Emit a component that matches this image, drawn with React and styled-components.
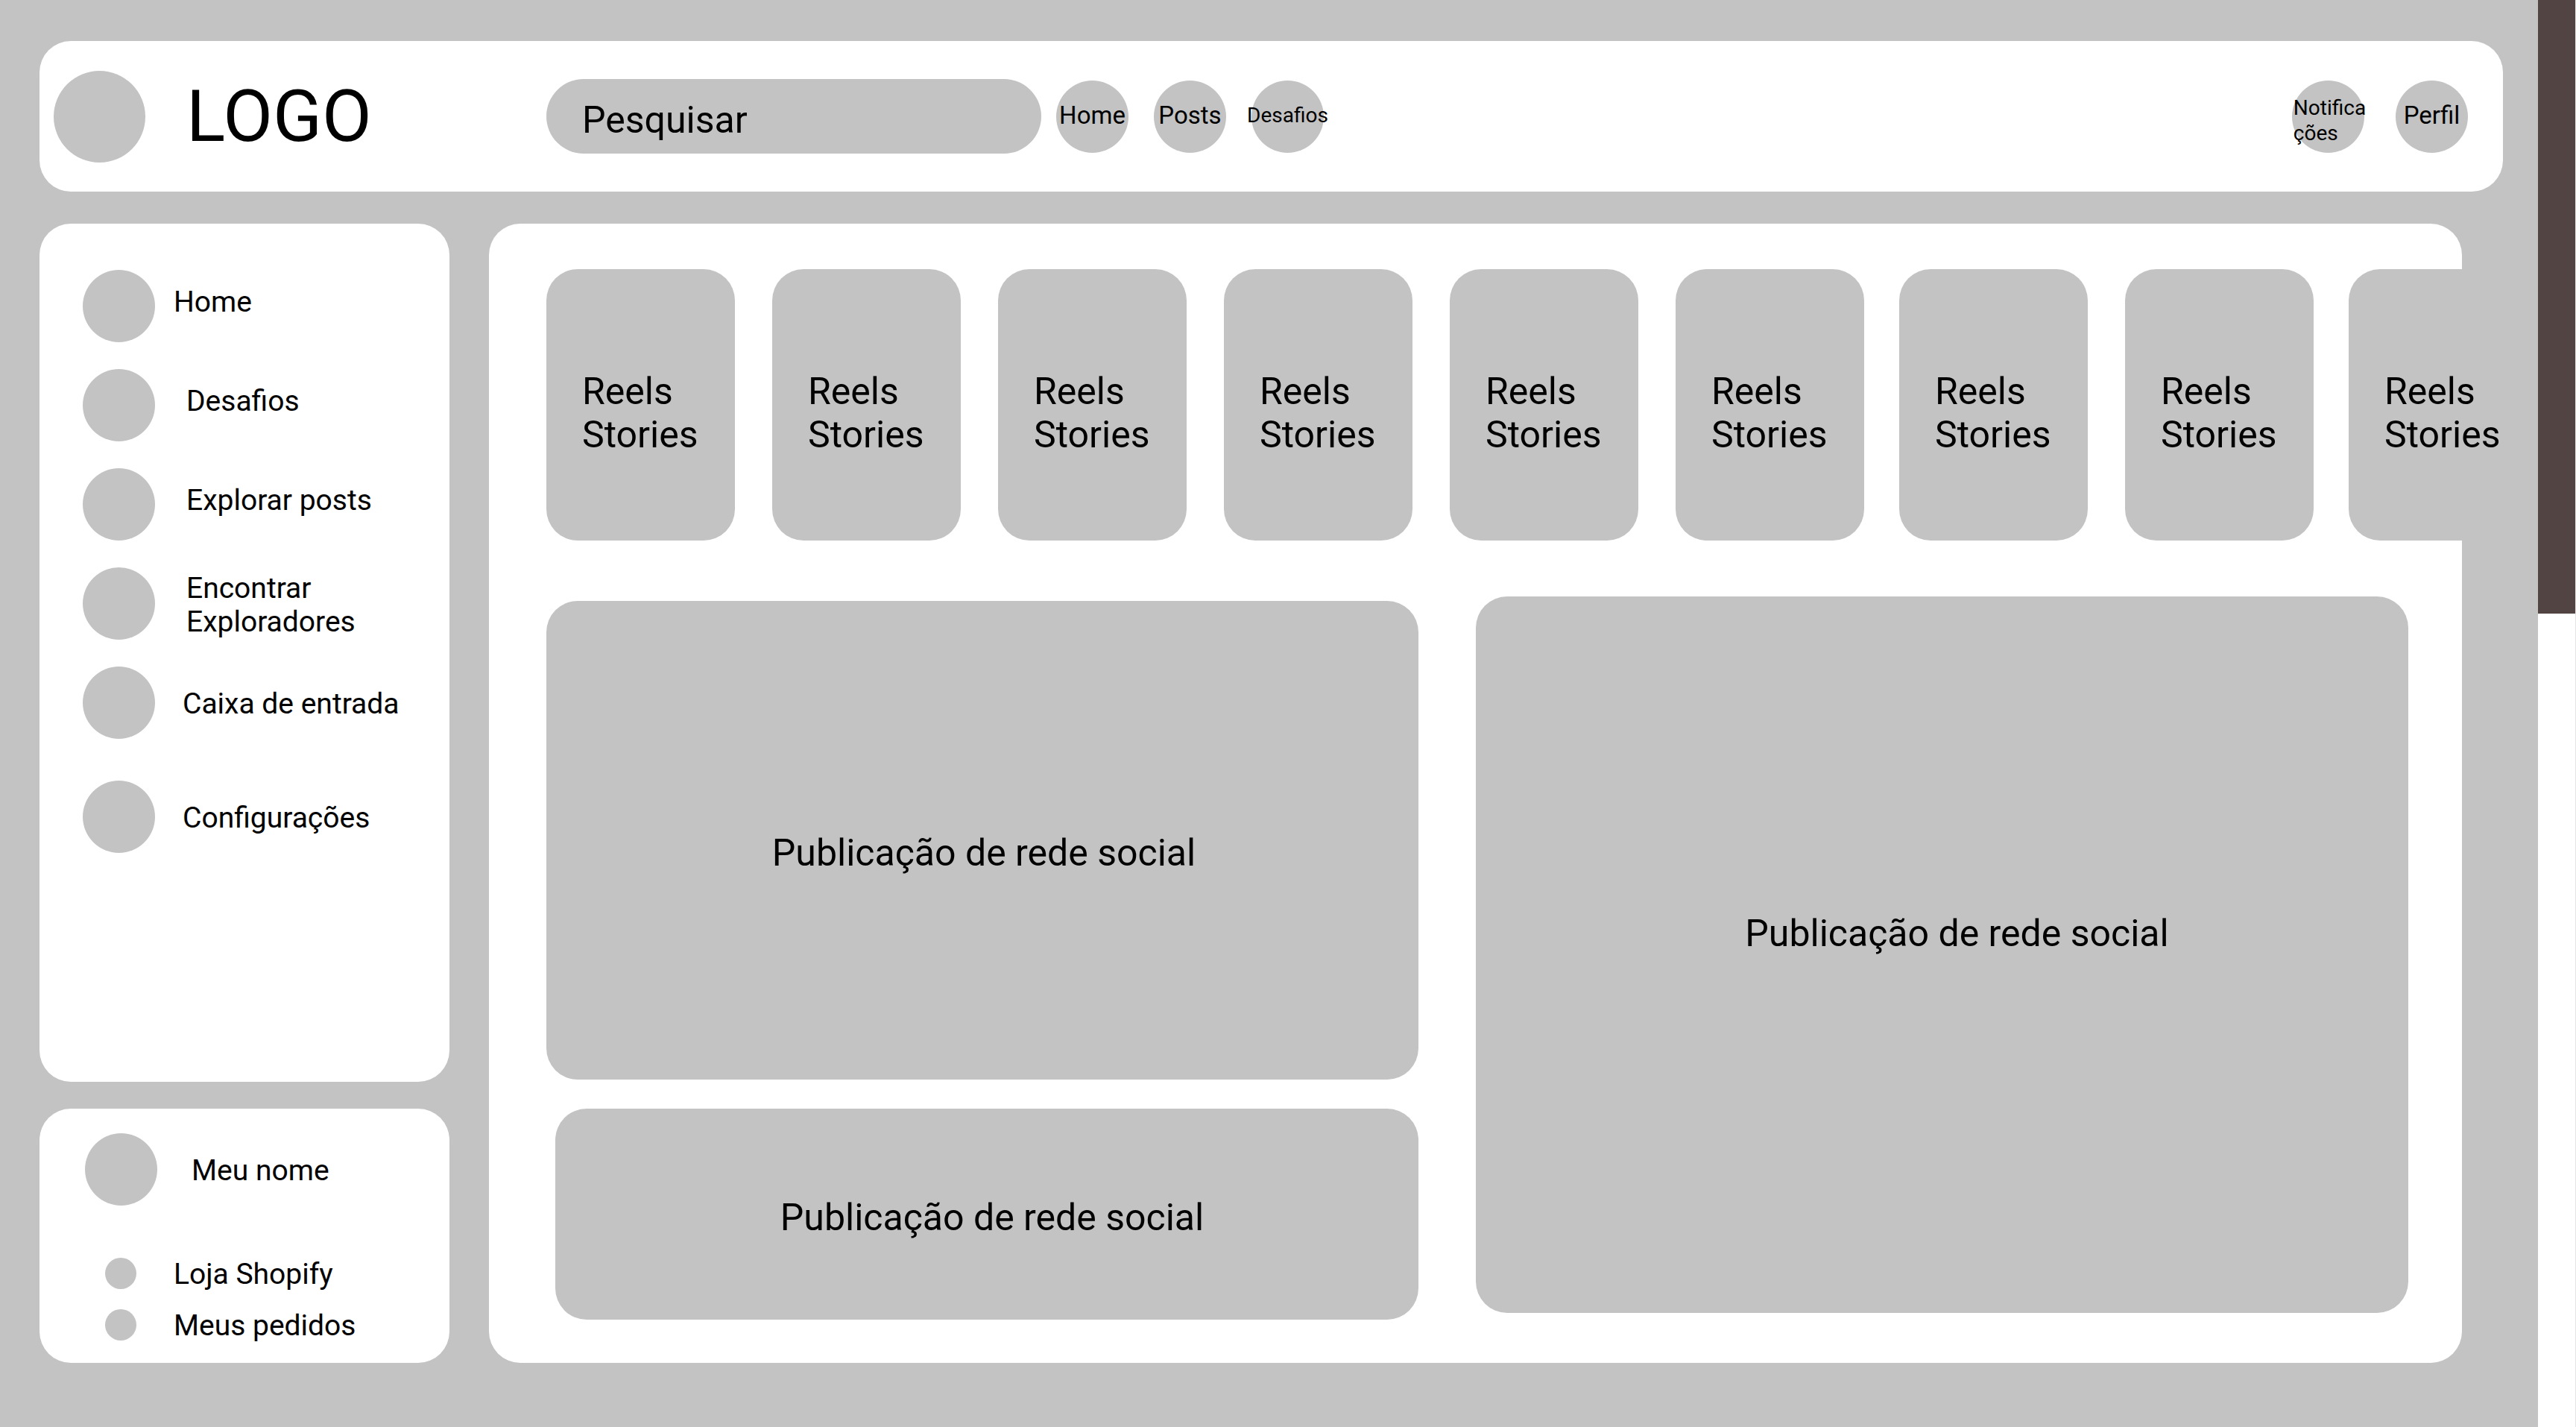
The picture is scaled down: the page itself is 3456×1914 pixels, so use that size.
import React from "react";
import styled, { createGlobalStyle } from "styled-components";

const GRAY = "#c3c3c3";

const GlobalStyle = createGlobalStyle`
  *, *::before, *::after { box-sizing: border-box; }
  html, body, #root { height: 100%; }
  body {
    margin: 0;
    background: ${GRAY};
    color: #000;
    font-family: Roboto, "Liberation Sans", sans-serif;
    overflow: hidden;
  }
`;

const Shell = styled.div`
  display: flex;
  min-height: 100%;
`;

const Page = styled.div`
  flex: 1;
  min-width: 0;
  display: flex;
  flex-direction: column;
  gap: 43px;
  padding: 55px 47px 86px 53px;
`;

const ScrollTrack = styled.div`
  flex: none;
  width: 51px;
  background: #fff;
  border-right: 1px solid #e4e4e4;
`;

const ScrollThumb = styled.div`
  height: 43%;
  background: #514443;
`;

const Header = styled.header`
  display: flex;
  align-items: center;
  height: 202px;
  padding: 0 47px 0 19px;
  background: #fff;
  border-radius: 42px;
`;

const Brand = styled.a`
  flex: none;
  display: flex;
  align-items: center;
  gap: 55px;
  width: 661px;
  font-size: 97px;
  line-height: 112px;
  color: inherit;
  text-decoration: none;
`;

const Dot = styled.span`
  flex: none;
  width: ${(p) => p.$size}px;
  height: ${(p) => p.$size}px;
  border-radius: 50%;
  background: ${GRAY};
`;

const Search = styled.input`
  flex: none;
  width: 664px;
  height: 100px;
  margin-right: 20px;
  padding: 10px 48px 0;
  border: 0;
  border-radius: 50px;
  background: ${GRAY};
  color: #000;
  font: inherit;
  font-size: 50px;
  &::placeholder { color: #000; opacity: 1; }
`;

const Shortcuts = styled.nav`
  display: flex;
  gap: ${(p) => p.$gap}px;
  margin-left: ${(p) => (p.$end ? "auto" : "0")};
`;

const RoundButton = styled.button`
  flex: none;
  display: flex;
  align-items: center;
  justify-content: center;
  width: 97px;
  height: 97px;
  padding: ${(p) => (p.$wrap ? "12px 0 0 4px" : "0 0 2px")};
  border: 0;
  border-radius: 50%;
  background: ${GRAY};
  color: #000;
  font-family: inherit;
  font-size: ${(p) => (p.$small ? 28 : 33)}px;
  line-height: 34px;
  text-align: left;
  white-space: pre;
`;

const Body = styled.div`
  flex: 1;
  display: flex;
  gap: 53px;
  padding-right: 55px;
`;

const Sidebar = styled.aside`
  flex: none;
  width: 550px;
  display: flex;
  flex-direction: column;
  gap: 36px;
`;

const Menu = styled.nav`
  flex: 1;
  display: flex;
  flex-direction: column;
  gap: 36px;
  padding: 62px 58px;
  background: #fff;
  border-radius: 42px;
`;

const MenuItem = styled.a`
  display: flex;
  align-items: center;
  gap: ${(p) => p.$gap}px;
  margin-top: ${(p) => (p.$apart ? 20 : 0)}px;
  color: inherit;
  font-size: 39px;
  line-height: 45px;
  text-decoration: none;
  white-space: pre;
`;

const Label = styled.span`
  padding: ${(p) => (p.$raised ? "0 0 10px" : "4px 0 0")};
`;

const Profile = styled.section`
  padding: 33px 61px 27px;
  background: #fff;
  border-radius: 42px;
`;

const ProfileLinks = styled.div`
  display: flex;
  flex-direction: column;
  gap: 20px;
  padding: 66px 0 0 27px;
`;

const Feed = styled.main`
  flex: 1;
  min-width: 0;
  display: flex;
  flex-direction: column;
  padding: 61px 72px 58px 77px;
  background: #fff;
  border-radius: 42px;
`;

const Reels = styled.div`
  display: flex;
  gap: 47px;
`;

const ReelGroup = styled.div`
  flex: none;
  display: flex;
  gap: 50px;
`;

const Reel = styled.button`
  flex: none;
  width: 253px;
  height: 364px;
  padding: 22px 0 0 48px;
  border: 0;
  border-radius: 42px;
  background: ${GRAY};
  color: #000;
  font-family: inherit;
  font-size: 50px;
  line-height: 58px;
  text-align: left;
`;

const Posts = styled.div`
  flex: 1;
  display: grid;
  grid-template-columns: 1170fr 1251fr;
  gap: 77px;
  padding-top: 75px;
`;

const PostColumn = styled.div`
  display: grid;
  grid-template-rows: 641fr 283fr;
  gap: 39px;
  padding-top: 6px;
`;

const Post = styled.article`
  display: flex;
  align-items: center;
  justify-content: center;
  margin: ${(p) => p.$margin || 0};
  padding: ${(p) => p.$padding};
  border-radius: 42px;
  background: ${GRAY};
  font-size: 50px;
  line-height: 58px;
`;

const menu = [
  { text: "Home", gap: 25, raised: true },
  { text: "Desafios", gap: 42, raised: true },
  { text: "Explorar posts", gap: 42, raised: true },
  { text: "Encontrar\nExploradores", gap: 42 },
  { text: "Caixa de entrada", gap: 37 },
  { text: "Configurações", gap: 37, apart: true },
];

const reelGroups = [6, 2, 1];

export default function App() {
  return (
    <>
      <GlobalStyle />
      <Shell>
        <Page>
          <Header>
            <Brand href="#">
              <Dot $size={123} />
              LOGO
            </Brand>
            <Search type="search" placeholder="Pesquisar" aria-label="Pesquisar" />
            <Shortcuts $gap={34}>
              <RoundButton>Home</RoundButton>
              <RoundButton>Posts</RoundButton>
              <RoundButton $small>Desafios</RoundButton>
            </Shortcuts>
            <Shortcuts $gap={42} $end>
              <RoundButton $small $wrap>{"Notifica\nções"}</RoundButton>
              <RoundButton>Perfil</RoundButton>
            </Shortcuts>
          </Header>
          <Body>
            <Sidebar>
              <Menu>
                {menu.map((item) => (
                  <MenuItem key={item.text} href="#" $gap={item.gap} $apart={item.apart}>
                    <Dot $size={97} />
                    <Label $raised={item.raised}>{item.text}</Label>
                  </MenuItem>
                ))}
              </Menu>
              <Profile>
                <MenuItem href="#" $gap={46}>
                  <Dot $size={97} />
                  <Label>Meu nome</Label>
                </MenuItem>
                <ProfileLinks>
                  <MenuItem href="#" $gap={50}>
                    <Dot $size={42} />
                    <Label>Loja Shopify</Label>
                  </MenuItem>
                  <MenuItem href="#" $gap={50}>
                    <Dot $size={42} />
                    <Label>Meus pedidos</Label>
                  </MenuItem>
                </ProfileLinks>
              </Profile>
            </Sidebar>
            <Feed>
              <Reels>
                {reelGroups.map((count, g) => (
                  <ReelGroup key={g}>
                    {Array.from({ length: count }, (_, i) => (
                      <Reel key={i}>
                        Reels
                        <br />
                        Stories
                      </Reel>
                    ))}
                  </ReelGroup>
                ))}
              </Reels>
              <Posts>
                <PostColumn>
                  <Post $padding="34px 0 0 4px">Publicação de rede social</Post>
                  <Post $margin="0 0 0 12px" $padding="10px 0 0 14px">
                    Publicação de rede social
                  </Post>
                </PostColumn>
                <Post $margin="0 0 9px" $padding="0 0 58px 40px">
                  Publicação de rede social
                </Post>
              </Posts>
            </Feed>
          </Body>
        </Page>
        <ScrollTrack>
          <ScrollThumb />
        </ScrollTrack>
      </Shell>
    </>
  );
}
